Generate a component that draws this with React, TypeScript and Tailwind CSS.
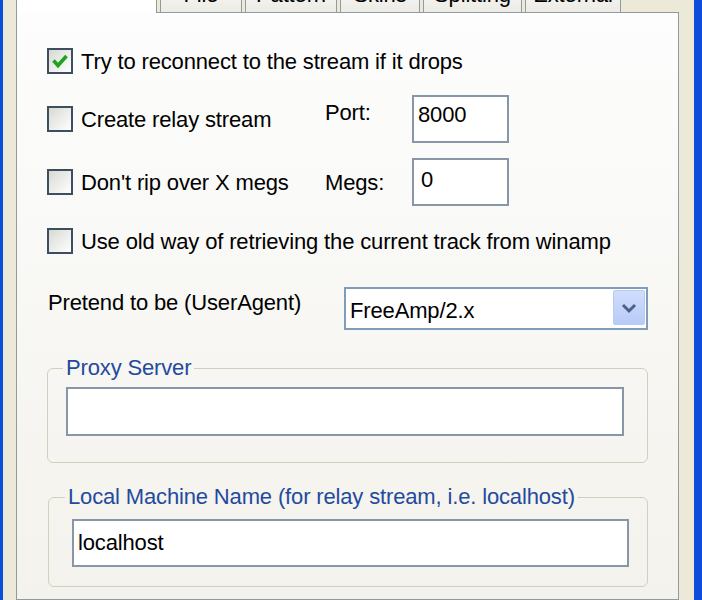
import React from 'react';

const tabs = [
    { label: 'File', w: 'w-[82px]' },
    { label: 'Pattern', w: 'w-[92px]' },
    { label: 'Skins', w: 'w-[80px]' },
    { label: 'Splitting', w: 'w-[99px]' },
    { label: 'External', w: 'w-[96px]' },
];

function CheckBox({ checked }: { checked?: boolean }) {
    return (
        <div className="flex h-[26px] w-[26px] shrink-0 items-center justify-center border-2 border-[#3d4e60] bg-gradient-to-br from-[#d9d9d3] to-white">
            {checked && (
                <svg width="18" height="16" viewBox="0 0 18 16">
                    <path d="M2.5 7.5 L7 12.5 L15.5 3" stroke="#21a121" strokeWidth="3.6" fill="none" />
                </svg>
            )}
        </div>
    );
}

function TextBox({ value, className }: { value?: string; className: string }) {
    return (
        <div className={`shrink-0 border-2 border-[#8797a8] bg-white px-[4px] ${className}`}>
            {value}
        </div>
    );
}

export default function App() {
    return (
        <div className="flex h-[600px] w-[702px] overflow-hidden bg-[#ece9d8] font-['Liberation_Sans',Arial,sans-serif] text-[22px] leading-[25px] tracking-[-0.15px] text-black">
            <div className="w-[3px] shrink-0 bg-[#0c4ed9]" />
            <div className="w-[13px] shrink-0" />

            <div className="flex w-[663px] shrink-0 flex-col">
                {/* tab strip, mostly above the visible area */}
                <div className="flex h-[12px] shrink-0 items-end gap-[3px]">
                    <div className="relative z-10 -mb-[1px] h-[60px] w-[141px] shrink-0 border-x border-t border-[#919b9c] bg-white" />
                    {tabs.map((t) => (
                        <div
                            key={t.label}
                            className={`flex h-[40px] shrink-0 items-end justify-center border border-b-0 border-[#919b9c] bg-gradient-to-b from-white to-[#ecebe5] pb-[5px] ${t.w}`}
                        >
                            {t.label}
                        </div>
                    ))}
                </div>

                {/* panel */}
                <div className="flex flex-1 flex-col border border-[#919b9c] bg-gradient-to-b from-[#fdfdfd] to-[#f3f2ec] pl-[30px] pt-[35px]">
                    <div className="flex h-[26px] items-center gap-[8px]">
                        <CheckBox checked />
                        <span>Try to reconnect to the stream if it drops</span>
                    </div>

                    <div className="mt-[21px] flex h-[48px] items-center">
                        <div className="flex w-[278px] items-center gap-[8px]">
                            <CheckBox />
                            <span>Create relay stream</span>
                        </div>
                        <span className="w-[87px] -translate-y-[7px]">Port:</span>
                        <TextBox value="8000" className="h-[48px] w-[97px] pt-[5px]" />
                    </div>

                    <div className="mt-[15px] flex h-[48px] items-center">
                        <div className="flex w-[278px] items-center gap-[8px]">
                            <CheckBox />
                            <span>Don't rip over X megs</span>
                        </div>
                        <span className="w-[87px]">Megs:</span>
                        <TextBox value="0" className="h-[48px] w-[97px] pl-[7px] pt-[7px]" />
                    </div>

                    <div className="mt-[22px] flex h-[26px] items-center gap-[8px]">
                        <CheckBox />
                        <span>Use old way of retrieving the current track from winamp</span>
                    </div>

                    <div className="mt-[33px] flex h-[43px] items-center">
                        <span className="w-[297px] -translate-y-[6px] pl-[1px]">Pretend to be (UserAgent)</span>
                        <div className="flex h-[43px] w-[304px] items-center border-2 border-[#7f9db9] bg-white pl-[4px] pr-[1px]">
                            <span className="pt-[3px]">FreeAmp/2.x</span>
                            <div className="ml-auto flex h-[35px] w-[32px] -translate-y-[1px] items-center justify-center rounded-[2px] border border-[#b9c9ef] bg-gradient-to-b from-[#d0ddfd] to-[#b7cbf7]">
                                <svg width="16" height="12" viewBox="0 0 16 12">
                                    <path d="M2 3 L8 9 L14 3" stroke="#4d6185" strokeWidth="3" fill="none" />
                                </svg>
                            </div>
                        </div>
                    </div>

                    <fieldset className="mt-[28px] w-[601px] rounded-[6px] border border-[#d0d0bf] pb-[26px] pl-[18px] pr-[23px]">
                        <legend className="-ml-[3px] px-[3px] leading-[20px] text-[#244a9e]">Proxy Server</legend>
                        <TextBox className="mt-[9px] h-[49px]" />
                    </fieldset>

                    <fieldset className="ml-[1px] mt-[24px] w-[600px] rounded-[6px] border border-[#d0d0bf] pb-[19px] pl-[23px] pr-[18px]">
                        <legend className="-ml-[7px] px-[3px] leading-[20px] text-[#244a9e]">
                            Local Machine Name (for relay stream, i.e. localhost)
                        </legend>
                        <TextBox value="localhost" className="mt-[12px] h-[48px] pt-[9px]" />
                    </fieldset>
                </div>
            </div>

            <div className="w-[15px] shrink-0" />
            <div className="w-[8px] shrink-0 bg-[#0c4ed9]" />
        </div>
    );
}
